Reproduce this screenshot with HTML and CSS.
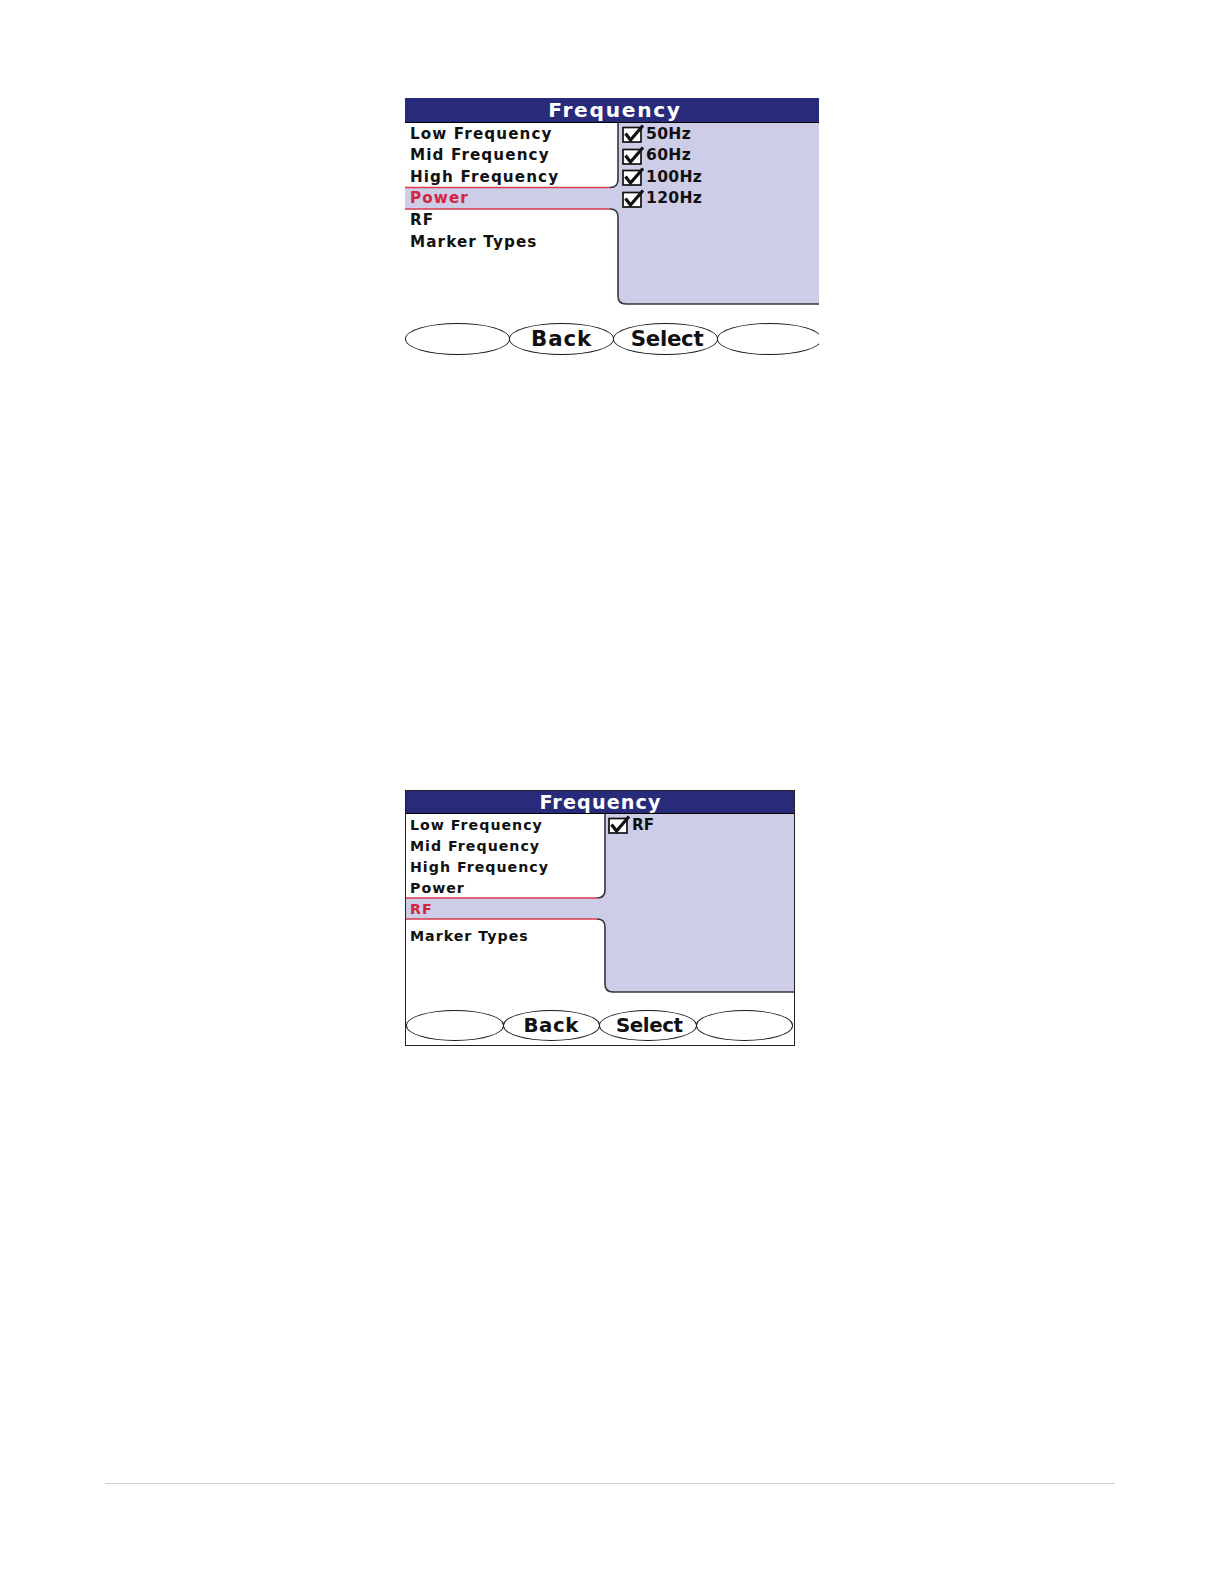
FILE: index.html
```html
<!DOCTYPE html>
<html lang="en">
<head>
<meta charset="utf-8">
<title>Frequency</title>
<link rel="stylesheet" href="styles.css">
</head>
<body>
<main class="page">
  <section class="device d1">
    <div class="title">Frequency</div>
    <div class="screen">
      <svg class="shape" width="414" height="200" viewBox="0 0 414 200">
        <path class="fill" d="M414 0H213V56.5Q213 64.5 205 64.5H0V86H205Q213 86 213 94V173Q213 181 221 181H414Z"/>
        <path class="edge" d="M213 0V56.5Q213 64.5 205 64.5M205 86Q213 86 213 94V173Q213 181 221 181H414"/>
        <path class="red" d="M0 64.5H205M0 86H205"/>
      </svg>
      <div class="cols">
        <ul class="menu">
          <li>Low Frequency</li>
          <li>Mid Frequency</li>
          <li>High Frequency</li>
          <li class="sel">Power</li>
          <li>RF</li>
          <li class="after">Marker Types</li>
        </ul>
        <ul class="opts">
          <li><svg class="cb" viewBox="0 0 22 19"><rect x="1" y="3.5" width="18" height="14.5"/><path d="M3.5 9.5L8.5 16L21 1.5"/></svg>50Hz</li>
          <li><svg class="cb" viewBox="0 0 22 19"><rect x="1" y="3.5" width="18" height="14.5"/><path d="M3.5 9.5L8.5 16L21 1.5"/></svg>60Hz</li>
          <li><svg class="cb" viewBox="0 0 22 19"><rect x="1" y="3.5" width="18" height="14.5"/><path d="M3.5 9.5L8.5 16L21 1.5"/></svg>100Hz</li>
          <li><svg class="cb" viewBox="0 0 22 19"><rect x="1" y="3.5" width="18" height="14.5"/><path d="M3.5 9.5L8.5 16L21 1.5"/></svg>120Hz</li>
        </ul>
      </div>
    </div>
    <div class="keys">
      <span class="key"></span>
      <span class="key back">Back</span>
      <span class="key select">Select</span>
      <span class="key"></span>
    </div>
  </section>

  <section class="device d2">
    <div class="title">Frequency</div>
    <div class="screen">
      <svg class="shape" width="388" height="196" viewBox="0 0 388 196">
        <path class="fill" d="M388 0H199V76Q199 84 191 84H0V105H191Q199 105 199 113V170Q199 178 207 178H388Z"/>
        <path class="edge" d="M199 0V76Q199 84 191 84M191 105Q199 105 199 113V170Q199 178 207 178H388"/>
        <path class="red" d="M0 84H191M0 105H191"/>
      </svg>
      <div class="cols">
        <ul class="menu">
          <li>Low Frequency</li>
          <li>Mid Frequency</li>
          <li>High Frequency</li>
          <li>Power</li>
          <li class="sel">RF</li>
          <li class="after">Marker Types</li>
        </ul>
        <ul class="opts">
          <li><svg class="cb" viewBox="0 0 22 19"><rect x="1" y="3.5" width="18" height="14.5"/><path d="M3.5 9.5L8.5 16L21 1.5"/></svg>RF</li>
        </ul>
      </div>
    </div>
    <div class="keys">
      <span class="key"></span>
      <span class="key back">Back</span>
      <span class="key select">Select</span>
      <span class="key"></span>
    </div>
  </section>
</main>
<footer class="rule"></footer>
</body>
</html>
```

FILE: styles.css
```css
html, body {
  margin: 0;
  padding: 0;
  background: #ffffff;
}

body {
  font-family: "DejaVu Sans", "Liberation Sans", sans-serif;
  color: #111111;
}

.page {
  padding: 98px 0 0 405px;
}

.device {
  box-sizing: border-box;
  overflow: hidden;
}

.d1 {
  width: 414px;
}

.d2 {
  width: 390px;
  margin-top: 435.5px;
  border: 1px solid #222222;
  padding-bottom: 4px;
}

.title {
  background: #282b7a;
  color: #ffffff;
  font-weight: bold;
  text-align: center;
  border-bottom: 1px solid #000000;
}

.d1 .title {
  height: 24px;
  line-height: 25px;
  font-size: 20.2px;
  letter-spacing: 1.7px;
  padding-left: 6px;
}

.d2 .title {
  height: 22px;
  line-height: 23px;
  font-size: 19.2px;
  letter-spacing: 1.1px;
  padding-left: 1px;
}

.screen {
  display: grid;
}

.screen > * {
  grid-area: 1 / 1;
}

.d1 .screen { height: 200px; }
.d2 .screen { height: 196px; }

.shape {
  display: block;
}

.shape .fill { fill: #cdcde7; }
.shape .edge { fill: none; stroke: #36363c; stroke-width: 1.6; }
.shape .red { fill: none; stroke: #d63a4c; stroke-width: 1.5; }

.cols {
  display: grid;
  align-items: start;
}

.d1 .cols { grid-template-columns: 213px 1fr; }
.d2 .cols { grid-template-columns: 199px 1fr; }

.menu, .opts {
  list-style: none;
  margin: 0;
  padding: 0;
}

.menu li {
  font-weight: bold;
  white-space: nowrap;
  display: flex;
  align-items: center;
  padding-left: 5px;
}

.d1 .menu li {
  height: 21.5px;
  font-size: 15.2px;
  letter-spacing: 1.1px;
}

.d2 .menu li {
  height: 21px;
  font-size: 14.2px;
  letter-spacing: 1px;
  padding-left: 4px;
}

.menu li.sel {
  color: #d3263c;
}

.d1 .menu li.after { margin-top: 1px; }
.d2 .menu li.after { margin-top: 6px; }

.opts li {
  display: flex;
  align-items: center;
  gap: 2px;
  font-weight: bold;
  white-space: nowrap;
}

.d1 .opts { padding-left: 4px; }
.d1 .opts li { height: 21.5px; font-size: 15.6px; letter-spacing: 0.3px; }
.d2 .opts { padding-left: 3px; }
.d2 .opts li { height: 21px; font-size: 15.2px; }

.cb {
  width: 22px;
  height: 19px;
  flex: 0 0 auto;
}

.cb rect {
  fill: #ffffff;
  stroke: #111111;
  stroke-width: 1.7;
}

.cb path {
  fill: none;
  stroke: #111111;
  stroke-width: 3.2;
}

.keys {
  display: flex;
  overflow: hidden;
}

.key {
  box-sizing: border-box;
  border: 1.5px solid #1a1a1a;
  border-radius: 50%;
  display: flex;
  align-items: center;
  justify-content: center;
  font-weight: bold;
  color: #111111;
  background: #ffffff;
  margin-right: -1px;
}

.d1 .keys {
  height: 31.5px;
}

.d1 .key {
  flex: 0 0 105px;
  height: 31.5px;
  font-size: 21.3px;
}

.d1 .key.back { letter-spacing: 0.9px; }
.d1 .key.select { letter-spacing: -0.3px; padding-left: 3px; }

.d2 .keys {
  height: 30.5px;
}

.d2 .key {
  flex: 0 0 97.5px;
  height: 30.5px;
  font-size: 19.8px;
}

.d2 .key.back { letter-spacing: 0.6px; }
.d2 .key.select { letter-spacing: -0.4px; padding-left: 3px; }

.rule {
  margin: 437.5px 0 0 105px;
  width: 1010px;
  border-top: 1px solid #d0d0d0;
}
```
